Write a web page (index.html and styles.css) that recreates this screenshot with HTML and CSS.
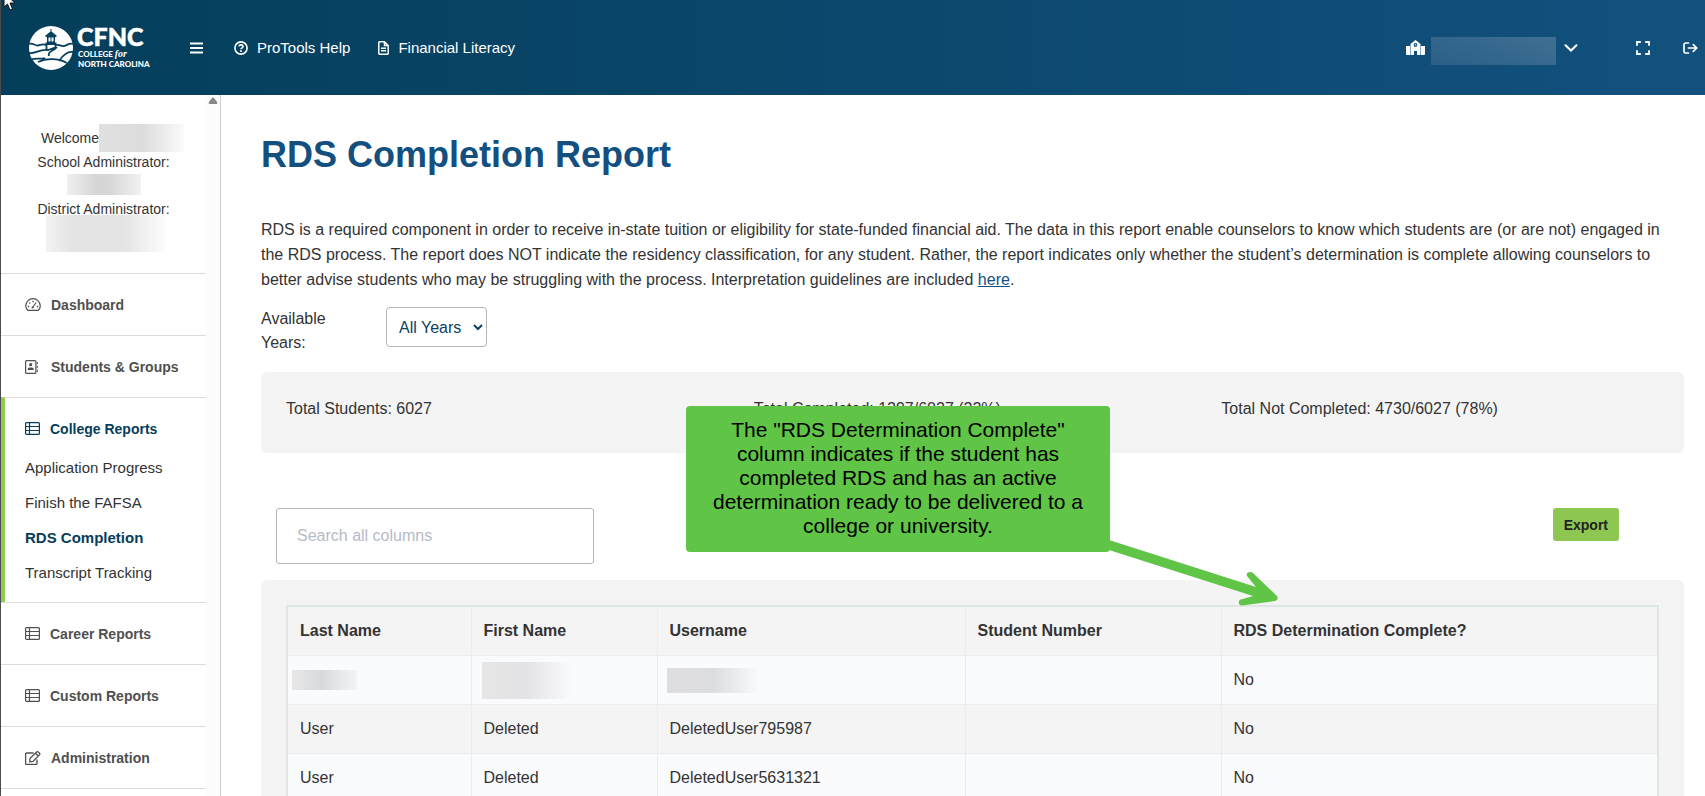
FILE: index.html
```html
<!DOCTYPE html>
<html lang="en">
<head>
    <meta charset="UTF-8">
    <meta name="viewport" content="width=device-width, initial-scale=1.0">
    <title>RDS Completion Report</title>
    <link rel="stylesheet" href="styles.css">
</head>
<body>

<!-- Icons shared by the sidebar entries -->
<svg class="sprite" aria-hidden="true">
    <symbol id="icon-table" viewBox="0 0 15 13">
        <path d="M1.6.6h11.8a1 1 0 0 1 1 1v9.8a1 1 0 0 1-1 1H1.6a1 1 0 0 1-1-1V1.6a1 1 0 0 1 1-1zM.6 4.5h13.8M.6 8.5h13.8M4.5.6v11.8" fill="none" stroke="currentColor" stroke-width="1.2"/>
    </symbol>
</svg>

<header class="topbar">
    <a href="#" class="logo" aria-label="CFNC College for North Carolina">
        <svg width="130" height="54" viewBox="0 -4 130 54">
            <circle cx="23" cy="23" r="22" fill="#fff"/>
            <!-- Lighthouse -->
            <path d="M22.500 4h1v2.500l5 4v1.500h-1.500v5.500h1.500v2.500h-11v-2.500h1.500v-5.500h-1.500v-1.500l5-4z" fill="#06405d"/>
            <path d="M20.500 12.500h2v4h-2zM23.500 12.500h2v4h-2z" fill="#fff"/>
            <!-- Hills and water -->
            <path d="M1 19c3-2 6 2 9 1.500s5-2 8-.5M45 19c-4-1.500-6 1.500-9 2s-5-2-8-1M18.500 20v5M27.500 20v3" fill="none" stroke="#06405d" stroke-width="1.800"/>
            <path d="M1 28c6 1 11-4 18-3 3 0 5-2 9-2-2 3-9 3-7 8M45 27c-6-1-10 3-14 9M2 35c8-3 13 0 15-2M10 37c8-4 20-4 29 1" fill="none" stroke="#06405d" stroke-width="1.800"/>
            <text x="49" y="21" class="logo-name">CFNC</text>
            <text x="50" y="32" class="logo-line">COLLEGE <tspan class="logo-for">for</tspan></text>
            <text x="50" y="42" class="logo-line">NORTH CAROLINA</text>
        </svg>
    </a>

    <nav class="top-links">
        <button class="icon-btn menu-btn" aria-label="Menu">
            <svg width="13" height="12" viewBox="0 0 13 12"><path d="M0 1.500h13M0 6h13M0 10.500h13" stroke="#fff" stroke-width="2.200"/></svg>
        </button>
        <a href="#" class="help-link">
            <svg width="14" height="14" viewBox="0 0 14 14" fill="none" stroke="#fff">
                <circle cx="7" cy="7" r="6.100" stroke-width="1.600"/>
                <path d="M5 5.300C5.200 3.300 9 3.400 9 5.500 9 6.800 7 6.800 7 8.200" stroke-width="1.600"/>
                <path d="M7 9.300v1.600" stroke-width="1.700"/>
            </svg>
            ProTools Help
        </a>
        <a href="#" class="doc-link">
            <svg width="11" height="14" viewBox="0 0 11 14">
                <path d="M.8 1.500a.7.7 0 0 1 .7-.7h5L10.200 4.500v8a.7.7 0 0 1-.7.7h-8a.7.7 0 0 1-.7-.7zM6.500.8v3.700h3.700" fill="none" stroke="#fff" stroke-width="1.500"/>
                <path d="M3 7.300h5M3 9.800h5" stroke="#fff" stroke-width="1.400"/>
            </svg>
            Financial Literacy
        </a>
    </nav>

    <div class="top-tools">
        <button class="school-btn" aria-label="Choose school">
            <svg width="19" height="15" viewBox="0 0 19 15">
                <path d="M0 6h4v9H1a1 1 0 0 1-1-1zM15 6h4v8a1 1 0 0 1-1 1h-3zM4.500 15V4l5-4 5 4v11h-3.500v-4H8v4z" fill="#fff"/>
                <circle cx="9.500" cy="5" r="1.900" fill="#12507d"/>
                <path d="M9.500 4v1.300h1" stroke="#fff" stroke-width=".7" fill="none"/>
            </svg>
            <span class="school-name"></span>
            <svg width="14" height="8" viewBox="0 0 14 8"><path d="M1.500 1.200L7 6.500l5.500-5.300" fill="none" stroke="#fff" stroke-width="2" stroke-linecap="round"/></svg>
        </button>
        <button class="icon-btn expand-btn" aria-label="Full screen">
            <svg width="14" height="14" viewBox="0 0 14 14"><path d="M1 4.800V1h3.800M9.200 1H13v3.800M13 9.200V13H9.200M4.800 13H1V9.200" fill="none" stroke="#fff" stroke-width="1.800"/></svg>
        </button>
        <button class="icon-btn" aria-label="Sign out">
            <svg width="15" height="12" viewBox="0 0 15 12" fill="none" stroke="#fff" stroke-width="1.700" stroke-linecap="round" stroke-linejoin="round">
                <path d="M5.500 1H2.500A1.600 1.600 0 0 0 1 2.600v6.800A1.600 1.600 0 0 0 2.500 11h3M5.500 6H13.500M10.300 2.600L13.800 6l-3.500 3.400"/>
            </svg>
        </button>
    </div>

    <svg class="pointer" width="13" height="20" viewBox="0 0 13 20"><path d="M1 1v14l3.500-3 2.500 6 2.500-1-2.500-6H12z" fill="#fff" stroke="#111" stroke-width="1"/></svg>
</header>

<div class="layout">
    <aside class="sidebar">
        <div class="sidebar-scroll">
            <div class="user">
                <p class="welcome">Welcome<span class="redacted name"></span></p>
                <p>School Administrator:</p>
                <span class="redacted school"></span>
                <p>District Administrator:</p>
                <span class="redacted district"></span>
            </div>
            <ul class="menu">
                <li>
                    <a href="#" class="menu-link">
                        <svg width="16" height="13" viewBox="0 0 16 13" fill="none" stroke="currentColor">
                            <path d="M2.800 12.300A7.300 7.300 0 0 1 .7 8a7.300 7.300 0 0 1 14.600 0c0 1.800-.8 3.300-2.100 4.300z" stroke-width="1.200"/>
                            <path d="M7.500 9.500l3.700-5" stroke-width="1.200"/>
                            <circle cx="7.600" cy="9.500" r="1.100" fill="currentColor" stroke="none"/>
                            <path d="M2.800 8.500h1.300M4 5.100h1.300M7.300 3.500h1.400M11.900 8.500h1.300" stroke-width="1.300"/>
                        </svg>
                        Dashboard
                    </a>
                </li>
                <li>
                    <a href="#" class="menu-link">
                        <svg width="16" height="14" viewBox="0 0 16 14">
                            <rect x=".6" y=".6" width="10.300" height="12.800" rx="1" fill="none" stroke="currentColor" stroke-width="1.200"/>
                            <circle cx="5.700" cy="4.700" r="1.600" fill="currentColor"/>
                            <path d="M2.800 10V8.800C2.800 7.200 8.700 7.200 8.700 8.800V10z" fill="currentColor"/>
                            <path d="M12.300 2v2.300M12.300 5.800v2.400M12.300 9.700V12" stroke="currentColor" stroke-width="1"/>
                        </svg>
                        Students &amp; Groups
                    </a>
                </li>
                <li class="open">
                    <a href="#" class="menu-link"><svg width="15" height="13"><use href="#icon-table"/></svg> College Reports</a>
                    <ul class="submenu">
                        <li><a href="#">Application Progress</a></li>
                        <li><a href="#">Finish the FAFSA</a></li>
                        <li><a href="#" class="current">RDS Completion</a></li>
                        <li><a href="#">Transcript Tracking</a></li>
                    </ul>
                </li>
                <li><a href="#" class="menu-link"><svg width="15" height="13"><use href="#icon-table"/></svg> Career Reports</a></li>
                <li><a href="#" class="menu-link"><svg width="15" height="13"><use href="#icon-table"/></svg> Custom Reports</a></li>
                <li>
                    <a href="#" class="menu-link">
                        <svg width="16" height="14" viewBox="0 0 16 14" fill="none" stroke="currentColor" stroke-width="1.300">
                            <path d="M8.500 2H1.600a1 1 0 0 0-1 1v9.400a1 1 0 0 0 1 1H11a1 1 0 0 0 1-1V8.500"/>
                            <path d="M5 7.500L11.600 1a1.200 1.200 0 0 1 1.700 0l1.200 1.200a1.200 1.200 0 0 1 0 1.600L8 10.400l-3.200.4zM10.500 2.200l2.800 2.800"/>
                        </svg>
                        Administration
                    </a>
                </li>
            </ul>
        </div>
        <div class="scroll-track">
            <svg width="10" height="7" viewBox="0 0 10 7"><path d="M4.200.8Q5 0 5.800.8L9.200 5q.6 2-.7 2h-7Q.200 7 .8 5z" fill="#888"/></svg>
        </div>
    </aside>

    <main class="content">
        <h1>RDS Completion Report</h1>
        <p class="intro">RDS is a required component in order to receive in-state tuition or eligibility for state-funded financial aid. The data in this report enable counselors to know which students are (or are not) engaged in the RDS process. The report does NOT indicate the residency classification, for any student. Rather, the report indicates only whether the student’s determination is complete allowing counselors to better advise students who may be struggling with the process. Interpretation guidelines are included <a href="#">here</a>.</p>

        <div class="years">
            <label for="years">Available Years:</label>
            <select id="years">
                <option>All Years</option>
            </select>
        </div>

        <div class="totals">
            <div>Total Students: 6027</div>
            <div>Total Completed: 1297/6027 (22%)</div>
            <div>Total Not Completed: 4730/6027 (78%)</div>
        </div>

        <div class="toolbar">
            <input type="text" id="search" placeholder="Search all columns" aria-label="Search all columns">
            <button class="btn">Export</button>
        </div>

        <div class="table-panel">
            <table>
                <colgroup>
                    <col class="col-last">
                    <col class="col-first">
                    <col class="col-user">
                    <col class="col-number">
                    <col>
                </colgroup>
                <thead>
                    <tr>
                        <th>Last Name</th>
                        <th>First Name</th>
                        <th>Username</th>
                        <th>Student Number</th>
                        <th>RDS Determination Complete?</th>
                    </tr>
                </thead>
                <tbody>
                    <tr>
                        <td class="hidden-cell"><span class="redacted last"></span></td>
                        <td class="hidden-cell"><span class="redacted first"></span></td>
                        <td class="hidden-cell"><span class="redacted username"></span></td>
                        <td></td>
                        <td>No</td>
                    </tr>
                    <tr>
                        <td>User</td>
                        <td>Deleted</td>
                        <td>DeletedUser795987</td>
                        <td></td>
                        <td>No</td>
                    </tr>
                    <tr>
                        <td>User</td>
                        <td>Deleted</td>
                        <td>DeletedUser5631321</td>
                        <td></td>
                        <td>No</td>
                    </tr>
                </tbody>
            </table>
        </div>

        <!-- Note pointing at the last column -->
        <div class="callout">
            The "RDS Determination Complete" column indicates if the student has completed RDS and has an active determination ready to be delivered to a college or university.
            <svg class="callout-arrow" width="172" height="70" viewBox="0 0 172 70">
                <path d="M0 4L147 51L138 40Q137 36 141 36Q144 36 145 38L168 60Q170 64 166 65L133 69.500Q129 69 130 65Q131 63 134 63L144 60L0 14Z" fill="#60c446"/>
            </svg>
        </div>
    </main>
</div>

</body>
</html>
```
FILE: styles.css
```css
* {
    box-sizing: border-box;
}
body {
    margin: 0;
    height: 100vh;
    display: flex;
    flex-direction: column;
    overflow: hidden;
    border-left: 1px solid #4b4b50;
    background-color: #fff;
    color: #333;
    font-family: "Liberation Sans", Arial, sans-serif;
    font-size: 16px;
    line-height: 24px;
}
p, ul {
    margin: 0;
    padding: 0;
}
ul {
    list-style: none;
}
a {
    color: inherit;
    text-decoration: none;
}
button {
    font-family: inherit;
    cursor: pointer;
}
.sprite {
    display: none;
}

/* Top bar */
.topbar {
    position: relative;
    flex: none;
    display: flex;
    align-items: center;
    height: 95px;
    padding: 0 7px 0 27px;
    background: linear-gradient(90deg, #043e5a 0%, #12507d 95%);
    color: #fff;
    font-size: 15px;
}
.logo svg {
    display: block;
}
.logo-name {
    font: 900 25px Lato, sans-serif;
    fill: #fff;
    stroke: #fff;
    stroke-width: 0.5;
}
.logo-line {
    font: 900 8px Lato, sans-serif;
    fill: #fff;
}
.logo-for {
    font: italic bold 10px "Liberation Serif", serif;
}
.top-links {
    display: flex;
    align-items: center;
    margin-left: 32px;
}
.top-links a {
    display: flex;
    align-items: center;
}
.help-link {
    gap: 9px;
    margin-left: 31px;
}
.doc-link {
    gap: 9px;
    margin-left: 28px;
}
.icon-btn, .school-btn {
    display: flex;
    align-items: center;
    padding: 0;
    border: none;
    background: none;
}
.top-tools {
    display: flex;
    align-items: center;
    margin-left: auto;
}
.school-name {
    width: 125px;
    height: 28px;
    margin: 6px 8px 0 6px;
    background: linear-gradient(20deg, #2b5f85, #3f7094);
}
.expand-btn {
    margin: 0 33px 0 58px;
}
.pointer {
    position: absolute;
    left: 2px;
    top: -8px;
}

/* Sidebar */
.layout {
    display: flex;
    flex: 1;
    min-height: 0;
}
.sidebar {
    flex: none;
    display: flex;
    width: 220px;
    border-right: 1px solid #ccc;
    font-size: 14px;
}
.sidebar-scroll {
    flex: 1;
    overflow: hidden;
}
.scroll-track {
    width: 14px;
    padding: 2px 2px;
    background-color: #fcfcfc;
}
.scroll-track svg {
    display: block;
}
.user {
    display: flex;
    flex-direction: column;
    align-items: center;
    height: 178px;
    padding-top: 31px;
}
.user p {
    display: flex;
    align-items: center;
    height: 24px;
}
.user .welcome {
    padding-left: 18px;
}
.redacted {
    display: block;
}
.name {
    width: 85px;
    height: 28px;
    background: linear-gradient(90deg, #e0e0e0, #dcdcdc 50%, #fafafa);
}
.school {
    width: 74px;
    height: 21px;
    margin-bottom: 2px;
    background: linear-gradient(90deg, #f0f0f0, #d5d5d5 40%, #d8d8d8 60%, #f1f1f1);
}
.district {
    width: 130px;
    height: 37px;
    margin-top: -6px;
    margin-left: 14px;
    background: linear-gradient(90deg, #f2f2f2, #e4e4e4 20%, #e4e4e4 60%, #fff 95%);
}
.menu > li {
    border-top: 1px solid #dcdcdc;
}
.menu > li:last-child {
    border-bottom: 1px solid #dcdcdc;
}
.menu-link {
    display: flex;
    align-items: center;
    gap: 10px;
    height: 61px;
    padding-left: 24px;
    color: #505050;
    font-weight: bold;
}
.menu .open {
    padding-bottom: 12px;
    border-left: 4px solid #8dcc4e;
}
.open .menu-link {
    padding-left: 20px;
    color: #063d5a;
}
.submenu {
    margin-top: -9px;
    font-size: 15px;
}
.submenu a {
    display: block;
    padding-left: 20px;
    line-height: 35px;
}
.submenu .current {
    color: #063d5a;
    font-weight: bold;
}

/* Report */
.content {
    position: relative;
    flex: 1;
    min-width: 0;
    padding: 36px 21px 0 40px;
    overflow: hidden;
}
h1 {
    margin: 0 0 38px;
    color: #134f7f;
    font-size: 36px;
    line-height: 48px;
}
.intro {
    line-height: 25px;
}
.intro a {
    color: #134f7f;
    text-decoration: underline;
}
.years {
    display: flex;
    align-items: flex-start;
    height: 65px;
    margin-top: 15px;
}
.years label {
    width: 125px;
    padding-right: 40px;
}
select {
    width: 101px;
    height: 40px;
    padding: 0 0 0 8px;
    border: 1px solid #b5b5b5;
    border-radius: 4px;
    background-color: #fff;
    color: #0b4262;
    font-family: inherit;
    font-size: 16px;
}
.totals {
    display: grid;
    grid-template-columns: repeat(3, 1fr);
    gap: 30px;
    height: 81px;
    padding: 25px;
    border-radius: 6px;
    background-color: #f4f4f4;
}
.toolbar {
    display: flex;
    justify-content: space-between;
    align-items: flex-start;
    margin: 55px 65px 16px 15px;
}
.toolbar input {
    width: 318px;
    height: 56px;
    padding: 0 20px;
    border: 1px solid #b5b5b5;
    border-radius: 3px;
    font-family: inherit;
    font-size: 16px;
}
.toolbar input::placeholder {
    color: #b6bac8;
}
.btn {
    height: 33px;
    padding: 0 11px;
    border: none;
    border-radius: 3px;
    background-color: #8dc751;
    color: #222;
    font-size: 14px;
    font-weight: bold;
}
.table-panel {
    padding: 25px;
    border-radius: 6px;
    background-color: #f4f4f4;
}
table {
    width: 100%;
    table-layout: fixed;
    border-collapse: collapse;
    border: 2px solid #dfe7e5;
}
.col-last {
    width: 184px;
}
.col-first {
    width: 186px;
}
.col-user {
    width: 308px;
}
.col-number {
    width: 256px;
}
th, td {
    padding: 12px;
    border: 1px solid #ebeced;
    text-align: left;
}
tbody tr:nth-child(odd) {
    background-color: #fafbfd;
}
.hidden-cell {
    padding: 0 4px;
}
.last {
    width: 65px;
    height: 20px;
    background: linear-gradient(90deg, #e8e8e9, #d8d9db 45%, #f3f4f6);
}
.first {
    width: 90px;
    height: 37px;
    margin-left: 6px;
    background: linear-gradient(90deg, #e6e6e7, #e3e3e5 50%, #fafbfd);
}
.username {
    width: 93px;
    height: 25px;
    margin-left: 5px;
    background: linear-gradient(90deg, #dededf, #dcdddf 50%, #fafbfd);
}

/* Callout */
.callout {
    position: absolute;
    left: 465px;
    top: 311px;
    width: 424px;
    height: 146px;
    padding: 12px 20px;
    border-radius: 4px;
    background-color: #60c446;
    color: #000;
    font-size: 21px;
    line-height: 24px;
    text-align: center;
}
.callout-arrow {
    position: absolute;
    left: 423px;
    top: 130px;
}
```
